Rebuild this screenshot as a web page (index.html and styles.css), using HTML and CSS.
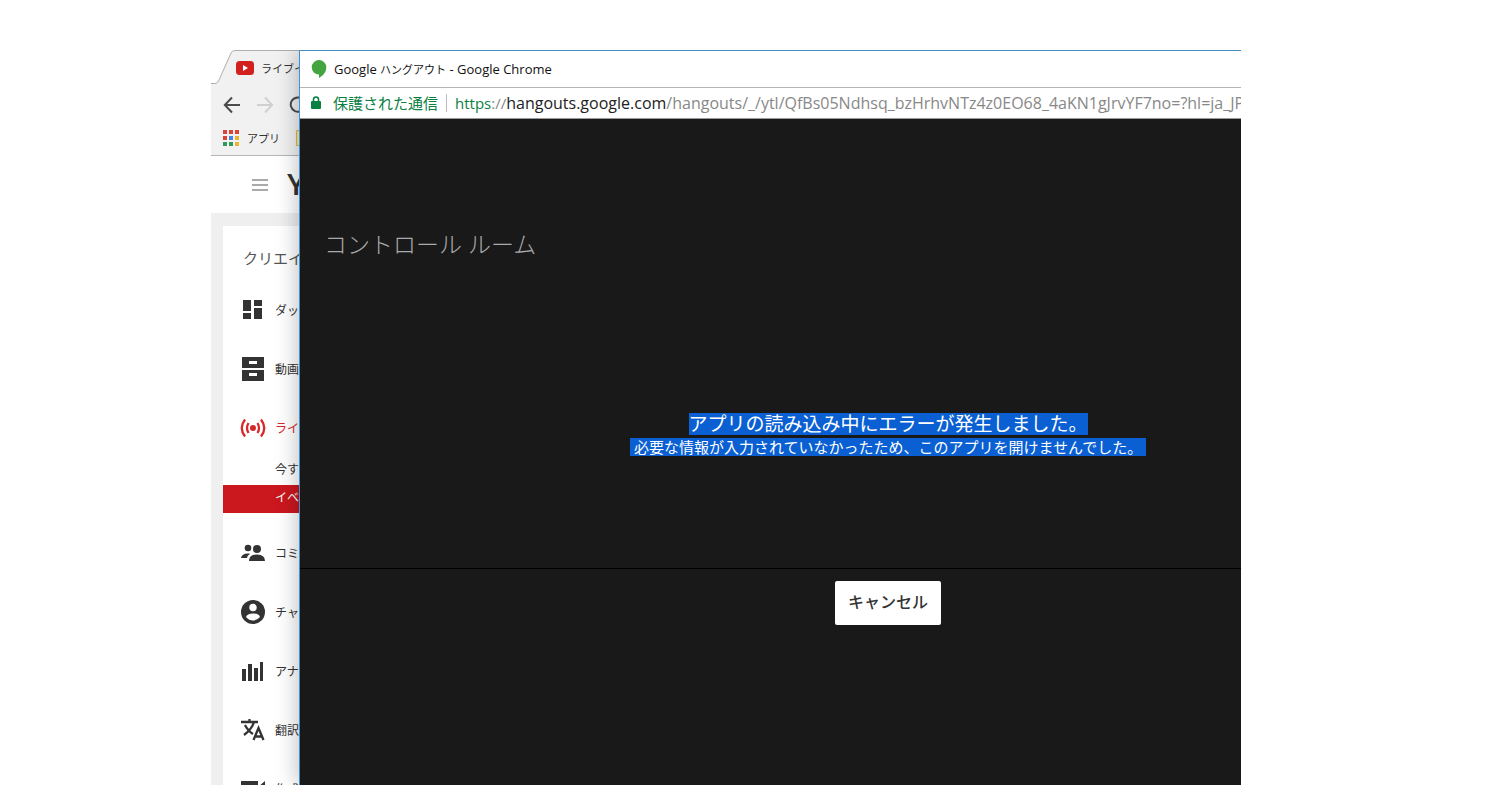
FILE: index.html
```html
<!DOCTYPE html>
<html lang="ja">
<head>
<meta charset="utf-8">
<title>Google ハングアウト - Google Chrome</title>
<link rel="stylesheet" href="styles.css">
</head>
<body>
<div class="desktop">
  <section class="back-window">
    <div class="tab">
      <svg class="tab-edge" width="24" height="34" viewBox="0 0 24 34"><path d="M0 33.5H4Q7 33.5 8 30L20 3Q21 .5 24 .5V34H0Z" fill="#f1f1f1"/><path d="M0 33.5H4Q7 33.5 8 30L20 3Q21 .5 24 .5" fill="none" stroke="#b0adad"/></svg>
      <div class="tab-label">
        <svg width="20" height="14" viewBox="0 0 20 14"><rect x="1" width="18" height="14" rx="3.500" fill="#d2201f"/><path d="M8 4L13 7L8 10Z" fill="#fff"/></svg>
        <span>ライブイベント</span>
      </div>
    </div>
    <div class="toolbar">
      <button class="icon-button" aria-label="戻る"><svg width="18" height="18" viewBox="0 0 18 18"><path d="M17 9H2M9 1.500L1.800 9L9 16.500" fill="none" stroke="#4c4c4c" stroke-width="2"/></svg></button>
      <button class="icon-button" aria-label="進む" disabled><svg width="18" height="18" viewBox="0 0 18 18"><path d="M1 9H16M9 1.500L16.200 9L9 16.500" fill="none" stroke="#d0d0d0" stroke-width="2"/></svg></button>
      <button class="icon-button" aria-label="再読み込み"><svg width="18" height="18" viewBox="0 0 18 18"><path d="M14.500 4A7.200 7.200 0 1 0 16 10M16 1V7H10" fill="none" stroke="#4c4c4c" stroke-width="2"/></svg></button>
    </div>
    <div class="bookmarks">
      <svg width="16" height="16" viewBox="0 0 16 16"><path d="M0 0h4v4H0zM6 0h4v4H6zM12 0h4v4h-4z" fill="#dc4437"/><path d="M0 6h4v4H0z" fill="#dc4437"/><path d="M6 6h4v4H6z" fill="#4285e8"/><path d="M12 6h4v4h-4z" fill="#e9b52c"/><path d="M0 12h4v4H0zM6 12h4v4H6z" fill="#2f9b58"/><path d="M12 12h4v4h-4z" fill="#e9b52c"/><path d="M4 0h2v16H4zM10 0h2v16h-2zM0 4h16v2H0zM0 10h16v2H0z" fill="#f1f1f1"/></svg>
      <span class="bookmark-name">アプリ</span>
      <svg class="folder" width="16" height="16" viewBox="0 0 16 16"><path d="M.5 .5H8L10 2.500H16V15.500H.5Z" fill="#fbe8a0" stroke="#d9b84c"/></svg>
    </div>
    <header class="site-header">
      <button class="icon-button" aria-label="メニュー"><svg width="16" height="12" viewBox="0 0 16 12"><path d="M0 1H16M0 6H16M0 11H16" stroke="#aaa" stroke-width="2"/></svg></button>
      <span class="wordmark">YouTube</span>
    </header>
    <div class="site-body">
      <nav class="card">
        <h2 class="card-title">クリエイター</h2>
        <a class="item" href="#"><svg width="24" height="24" viewBox="0 0 24 24"><path d="M2 2H10V13H2ZM2 15H10V21H2ZM13 2H21V8H13ZM13 10H21V21H13Z" fill="#333"/></svg><span>ダッシュボード</span></a>
        <a class="item" href="#"><svg width="24" height="24" viewBox="0 0 24 24"><path fill-rule="evenodd" d="M1 0H23V11H1ZM8 4V7H16V4ZM1 13H23V24H1ZM8 16V19H16V16Z" fill="#333"/></svg><span>動画の管理</span></a>
        <a class="item live" href="#"><svg width="26" height="20" viewBox="0 0 26 20"><circle cx="13" cy="10" r="3" fill="#d6282b"/><path d="M8.500 5Q5.500 10 8.500 15M17.500 5Q20.500 10 17.500 15M5 1.500Q-1.500 10 5 18.500M21 1.500Q27.500 10 21 18.500" fill="none" stroke="#d6282b" stroke-width="2.300"/></svg><span>ライブ</span></a>
        <a class="sub" href="#">今すぐ</a>
        <a class="sub selected" href="#">イベント</a>
        <a class="item" href="#"><svg width="24" height="24" viewBox="0 0 24 24"><g fill="#333"><circle cx="7" cy="7" r="3.300"/><circle cx="16" cy="8" r="4"/><path d="M0 17Q1 12 8 12.500Q10 12.500 7 14.500Q6 16 6 17ZM8 20Q8 13.500 16 13.500Q24 13.500 24 20Z"/></g></svg><span>コミュニティ</span></a>
        <a class="item" href="#"><svg width="24" height="24" viewBox="0 0 24 24"><circle cx="12" cy="12" r="12" fill="#333"/><circle cx="12" cy="7.500" r="3.700" fill="#fff"/><path d="M5 17Q6 13.500 12 13.500Q18 13.500 19 17Q16 20.500 12 20.500Q8 20.500 5 17Z" fill="#fff"/></svg><span>チャンネル</span></a>
        <a class="item" href="#"><svg width="24" height="24" viewBox="0 0 24 24"><path d="M1 10H5V22H1ZM7 5H11V22H7ZM13 9H17V22H13ZM19 3H22V22H19Z" fill="#333"/></svg><span>アナリティクス</span></a>
        <a class="item" href="#"><svg width="24" height="24" viewBox="0 0 24 24"><path d="M0 4H17M8.500 1V4M3 17Q11 11 13 4M4 7Q7 13 12 16" fill="none" stroke="#333" stroke-width="2.300"/><path d="M12.500 22L17.500 10L22.500 22M14.500 18.500H21" fill="none" stroke="#333" stroke-width="2.300"/></svg><span>翻訳と文字起こし</span></a>
        <a class="item" href="#"><svg width="24" height="24" viewBox="0 0 24 24"><path d="M0 4H17V10L24 4V20L17 14V20H0Z" fill="#333"/></svg><span>作成</span></a>
      </nav>
    </div>
  </section>

  <section class="front-window">
    <div class="title-bar">
      <svg width="16" height="20" viewBox="0 0 16 20"><path d="M8 1A7.300 7.300 0 0 1 15.300 8.300C15.300 13 12 17 8 19V15.600A7.300 7.300 0 0 1 8 1Z" fill="#43a440"/></svg>
      <span class="window-name">Google <span class="kana">ハングアウト</span> - Google Chrome</span>
    </div>
    <div class="address-bar">
      <svg width="10" height="14" viewBox="0 0 10 14"><path d="M2.500 6V3.500A2.500 2.500 0 0 1 7.500 3.500V6" fill="none" stroke="#0b8043" stroke-width="1.600"/><rect y="5" width="10" height="8" rx="1" fill="#0b8043"/></svg>
      <span class="secure">保護された通信</span>
      <span class="url"><span class="scheme"><span class="protocol">https</span>://</span><span class="host">hangouts.google.com</span>/hangouts/_/ytl/QfBs05Ndhsq_bzHrhvNTz4z0EO68_4aKN1gJrvYF7no=?hl=ja_JP</span>
    </div>
    <main class="app">
      <h1 class="room">コントロール ルーム</h1>
      <div class="message">
        <p class="error"><mark>アプリの読み込み中にエラーが発生しました。</mark></p>
        <p class="reason"><mark>必要な情報が入力されていなかったため、このアプリを開けませんでした。</mark></p>
      </div>
      <footer class="actions"><button class="cancel">キャンセル</button></footer>
    </main>
  </section>
</div>
</body>
</html>
```
FILE: styles.css
```css
* { box-sizing: border-box; }
body {
  margin: 0;
  background: #fff;
  font-family: "Open Sans", "Noto Sans CJK JP", sans-serif;
  font-size: 13px;
  color: #333;
}
h1, h2, p { margin: 0; font-weight: 400; }
svg { display: block; flex: none; }
a { color: inherit; text-decoration: none; }
button { font: inherit; border: 0; padding: 0; }

.desktop {
  display: grid;
  grid-template-columns: 88px minmax(0, 1fr);
  height: 100vh;
  padding: 50px 259px 0 211px;
  overflow: hidden;
  white-space: nowrap;
}

.back-window {
  display: flex;
  flex-direction: column;
  min-width: 0;
  overflow: hidden;
}
.icon-button { flex: none; background: none; }
.tab { display: flex; flex: none; height: 34px; }
.tab-edge { flex: none; }
.tab-label {
  display: flex;
  flex: 1 0 auto;
  align-items: center;
  gap: 6px;
  background: #f1f1f1;
  border-top: 1px solid #b0adad;
  font-size: 11px;
}
.toolbar {
  display: flex;
  flex: none;
  align-items: center;
  gap: 15px;
  height: 42px;
  padding-left: 12px;
  background: #f1f1f1;
}
.bookmarks {
  display: flex;
  flex: none;
  align-items: center;
  height: 30px;
  padding: 0 0 6px 12px;
  background: #f1f1f1;
  border-bottom: 1px solid #b6b6b6;
}
.bookmark-name { width: 32px; margin: 0 17px 0 8px; font-size: 11px; }
.site-header {
  display: flex;
  flex: none;
  align-items: center;
  gap: 19px;
  height: 57px;
  padding-left: 41px;
}
.wordmark {
  font-family: Roboto, "Liberation Sans", sans-serif;
  font-size: 30px;
  font-weight: 500;
}
.site-body {
  flex: 1;
  padding: 13px 0 0 12px;
  background: #efefef;
  overflow: hidden;
}
.card { width: 240px; background: #fff; }
.card-title {
  padding: 11px 0 0 20px;
  font-size: 15px;
  line-height: 43px;
  color: #555;
}
.item {
  display: flex;
  align-items: center;
  gap: 10px;
  height: 59px;
  padding-left: 18px;
  font-size: 12px;
}
.item.live { gap: 9px; padding-left: 17px; color: #d6282b; }
.sub {
  display: block;
  height: 28px;
  padding-left: 52px;
  font-size: 12px;
  line-height: 26px;
}
.sub.selected { margin-bottom: 10px; background: #cb171e; color: #fff; }

.front-window {
  position: relative;
  display: flex;
  flex-direction: column;
  min-width: 0;
  overflow: hidden;
  background: #fff;
  border-top: 1px solid #4a8fc4;
  border-left: 1px solid #3a93d6;
  box-shadow: -2px 0 20px rgba(0, 0, 0, 0.25);
  clip-path: inset(0 0 0 -40px);
}
.title-bar {
  display: flex;
  flex: none;
  align-items: center;
  gap: 7px;
  height: 37px;
  padding-left: 11px;
  border-bottom: 1px solid #b4b4b4;
  color: #111;
}
.kana { font-size: 11px; }
.address-bar {
  display: flex;
  flex: none;
  align-items: center;
  height: 31px;
  padding-left: 11px;
  border-bottom: 1px solid #9a9a9a;
  font-size: 16px;
}
.secure {
  margin-left: 12px;
  padding-right: 8px;
  border-right: 1px solid #bbb;
  font-size: 15px;
  line-height: 18px;
  color: #0b8043;
}
.url { padding-left: 8px; color: #888; }
.scheme { font-size: 15px; }
.protocol { color: #0b8043; }
.host { color: #222; }

.app {
  flex: 1;
  width: 125%;
  padding-top: 109px;
  background: #191919;
}
.room {
  padding-left: 24px;
  font-size: 23px;
  line-height: 32px;
  color: #aaa;
  font-weight: 300;
}
.message {
  display: flex;
  flex-direction: column;
  gap: 3px;
  align-items: center;
  padding: 153px 0 112px;
}
.message mark { display: block; background: #0a60d2; color: #fff; }
.error { font-size: 19px; line-height: 22px; }
.reason { font-size: 15px; line-height: 18px; }
.reason mark { padding: 0 4px; }
.actions {
  display: flex;
  justify-content: center;
  padding-top: 12px;
  border-top: 1px solid #000;
}
.cancel {
  height: 44px;
  padding: 0 13px 4px;
  border-radius: 2px;
  background: #fff;
  color: #333;
  font-size: 16px;
  font-weight: 500;
}
```
